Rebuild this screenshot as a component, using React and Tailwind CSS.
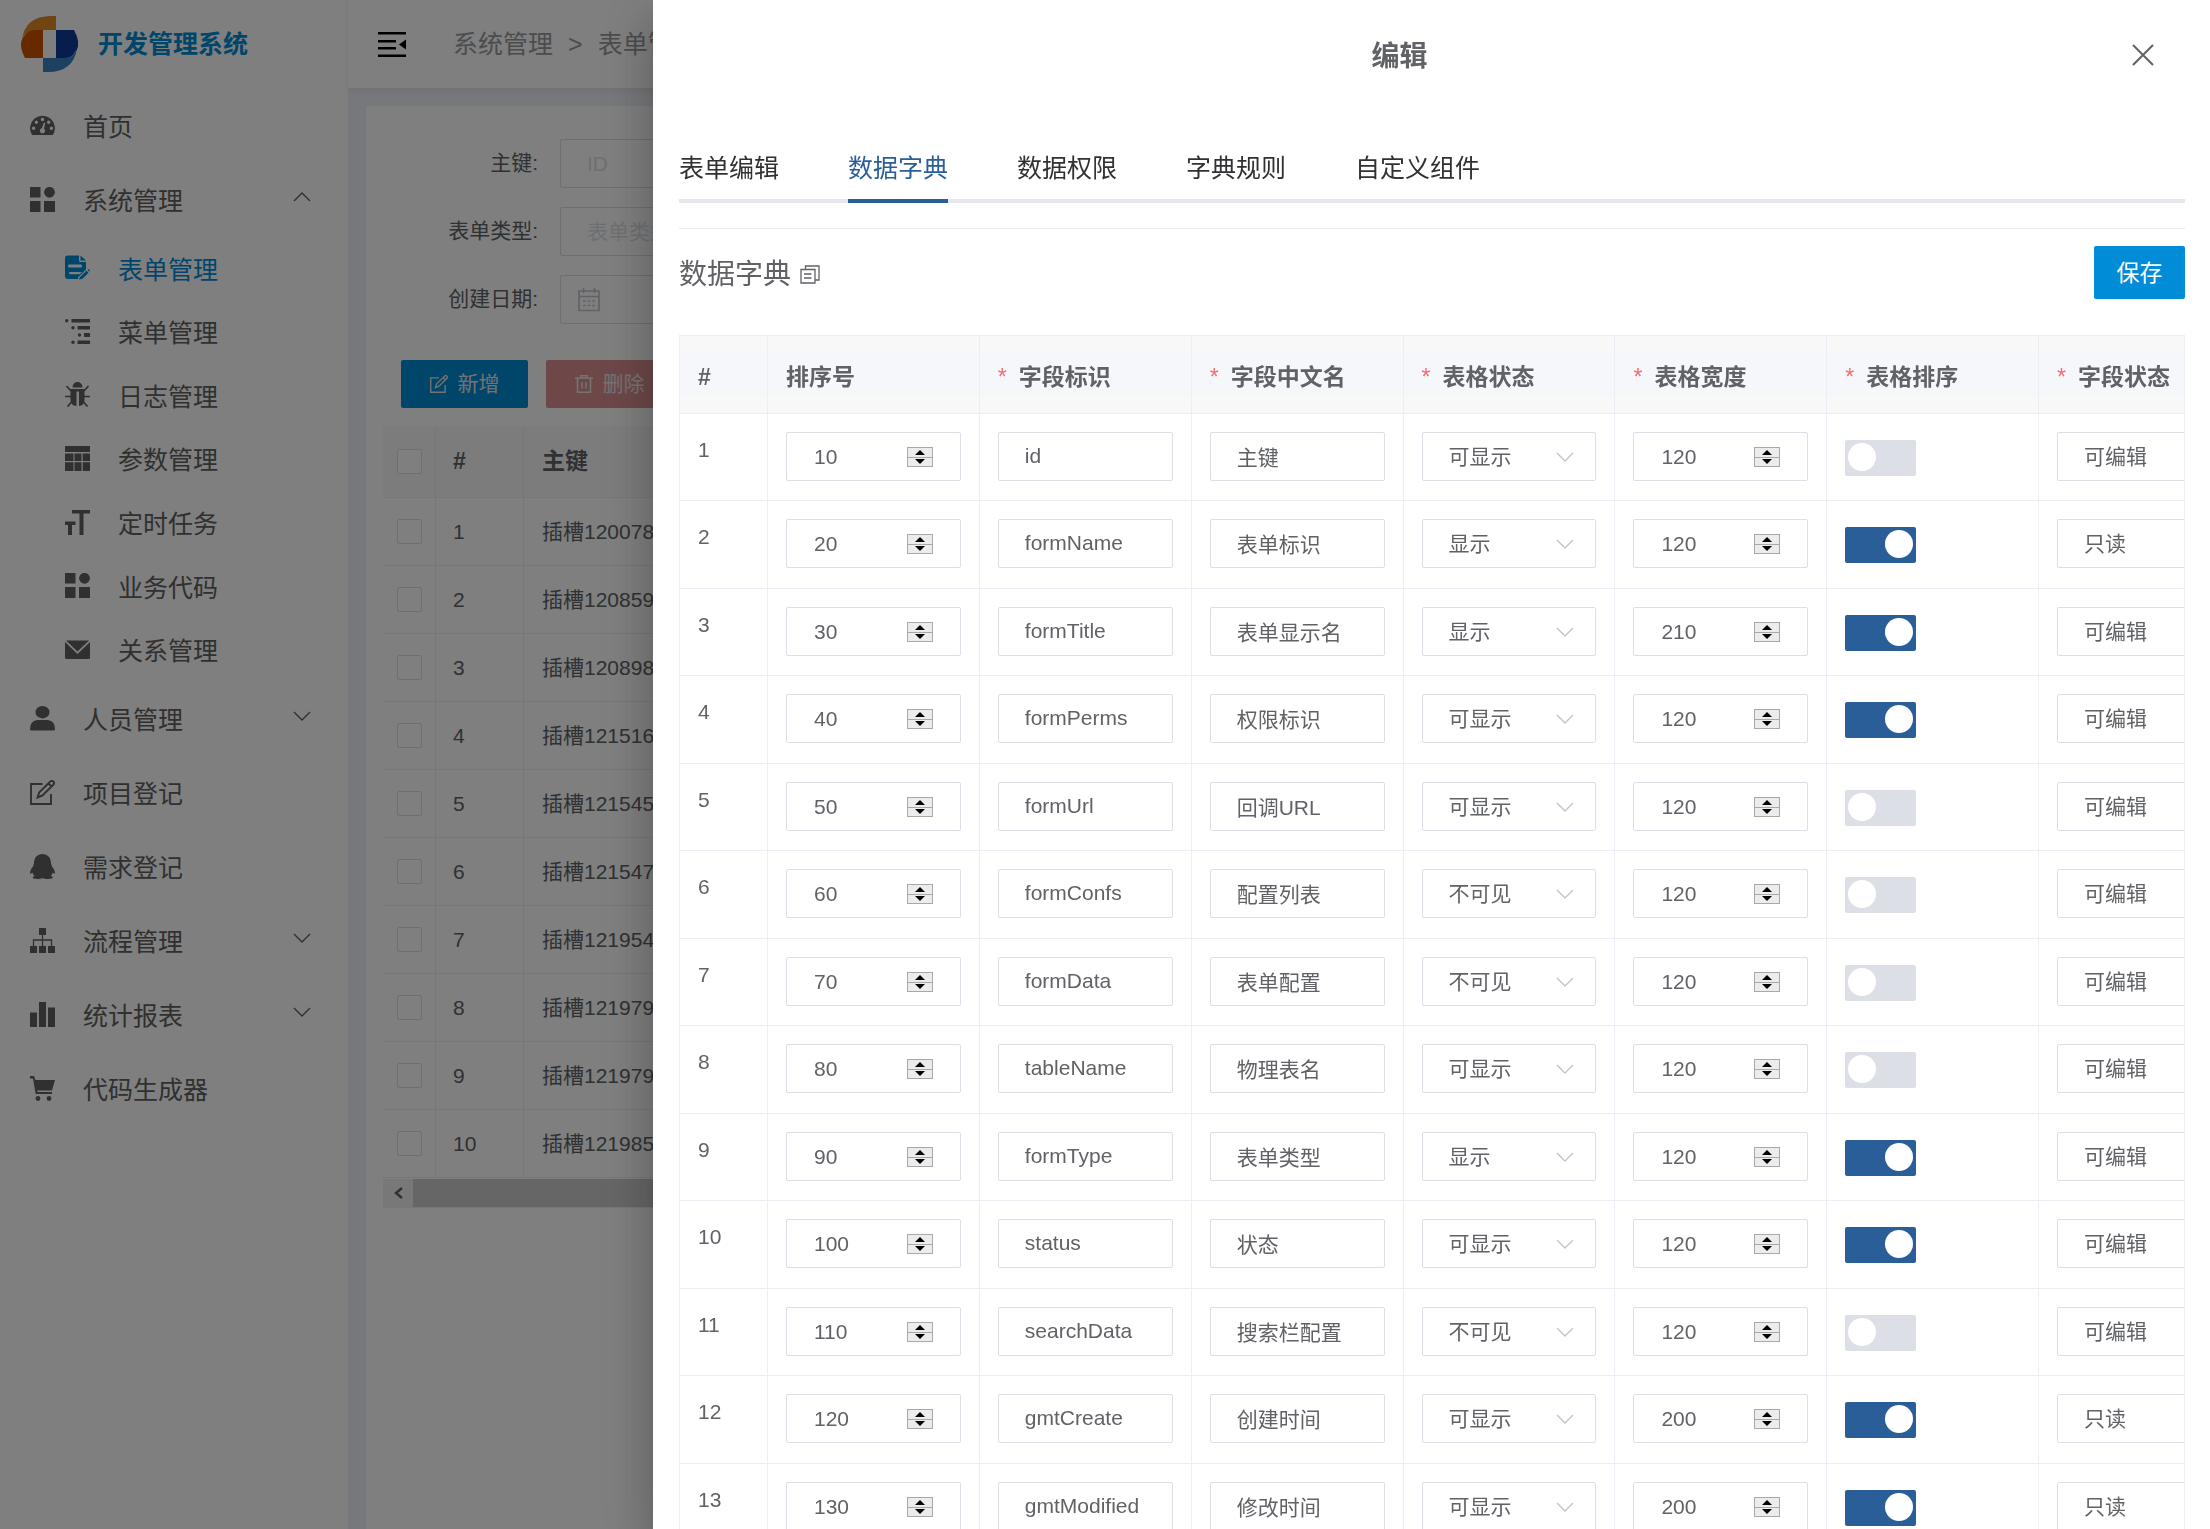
import React, { useState } from "react";

const menus = [
  { name: "首页", icon: "dashboard" },
  {
    name: "系统管理",
    icon: "blocks",
    open: true,
    children: [
      { name: "表单管理", icon: "form", active: true },
      { name: "菜单管理", icon: "tree" },
      { name: "日志管理", icon: "bug" },
      { name: "参数管理", icon: "grid" },
      { name: "定时任务", icon: "size" },
      { name: "业务代码", icon: "blocks" },
      { name: "关系管理", icon: "mail" },
    ],
  },
  { name: "人员管理", icon: "user", arrow: true },
  { name: "项目登记", icon: "edit" },
  { name: "需求登记", icon: "qq" },
  { name: "流程管理", icon: "flow", arrow: true },
  { name: "统计报表", icon: "chart", arrow: true },
  { name: "代码生成器", icon: "cart" },
];

const slots = [
  "插槽120078",
  "插槽120859",
  "插槽120898",
  "插槽121516",
  "插槽121545",
  "插槽121547",
  "插槽121954",
  "插槽121979",
  "插槽121979",
  "插槽121985",
];

const tabs = ["表单编辑", "数据字典", "数据权限", "字典规则", "自定义组件"];

const columns = [
  { label: "排序号" },
  { label: "字段标识", required: true },
  { label: "字段中文名", required: true },
  { label: "表格状态", required: true },
  { label: "表格宽度", required: true },
  { label: "表格排序", required: true },
  { label: "字段状态", required: true },
];

const fields = [
  { sort: 10, prop: "id", label: "主键", show: "可显示", width: 120, sortable: false, edit: "可编辑" },
  { sort: 20, prop: "formName", label: "表单标识", show: "显示", width: 120, sortable: true, edit: "只读" },
  { sort: 30, prop: "formTitle", label: "表单显示名", show: "显示", width: 210, sortable: true, edit: "可编辑" },
  { sort: 40, prop: "formPerms", label: "权限标识", show: "可显示", width: 120, sortable: true, edit: "可编辑" },
  { sort: 50, prop: "formUrl", label: "回调URL", show: "可显示", width: 120, sortable: false, edit: "可编辑" },
  { sort: 60, prop: "formConfs", label: "配置列表", show: "不可见", width: 120, sortable: false, edit: "可编辑" },
  { sort: 70, prop: "formData", label: "表单配置", show: "不可见", width: 120, sortable: false, edit: "可编辑" },
  { sort: 80, prop: "tableName", label: "物理表名", show: "可显示", width: 120, sortable: false, edit: "可编辑" },
  { sort: 90, prop: "formType", label: "表单类型", show: "显示", width: 120, sortable: true, edit: "可编辑" },
  { sort: 100, prop: "status", label: "状态", show: "可显示", width: 120, sortable: true, edit: "可编辑" },
  { sort: 110, prop: "searchData", label: "搜索栏配置", show: "不可见", width: 120, sortable: false, edit: "可编辑" },
  { sort: 120, prop: "gmtCreate", label: "创建时间", show: "可显示", width: 200, sortable: true, edit: "只读" },
  { sort: 130, prop: "gmtModified", label: "修改时间", show: "可显示", width: 200, sortable: true, edit: "只读" },
];

const icons = {
  dashboard: (
    <path
      fillRule="evenodd"
      d="M2.2 22A12.4 12.4 0 1 1 22.8 22ZM12.5 4.8a1.7 1.7 0 1 0 0 3.4a1.7 1.7 0 0 0 0-3.4ZM6.3 7.5a1.7 1.7 0 1 0 0 3.4a1.7 1.7 0 0 0 0-3.4ZM18.7 7.5a1.7 1.7 0 1 0 0 3.4a1.7 1.7 0 0 0 0-3.4ZM3.6 13.6a1.7 1.7 0 1 0 0 3.4a1.7 1.7 0 0 0 0-3.4ZM21.4 13.6a1.7 1.7 0 1 0 0 3.4a1.7 1.7 0 0 0 0-3.4ZM14 9.5L11.8 15.3a2.6 2.6 0 1 0 2.2.4L15.2 9.9Z"
    />
  ),
  blocks: (
    <>
      <path d="M0 0H10.5V10.5H0ZM0 14H10.5V25H0ZM14 14H25V25H14Z" />
      <circle cx="19.5" cy="5.3" r="5.4" />
    </>
  ),
  form: (
    <>
      <path
        fillRule="evenodd"
        d="M3 0.5H14V5.5Q14 7 15.5 7H21V14.5L13 22.5V24H3Q0 24 0 21V3.500Q0 .5 3 .5ZM4 9.500Q3 9.500 3 11T4 12.500H16Q17 12.500 17 11T16 9.500ZM5 17Q4 17 4 18T5 19.200H14.500L17 17Z"
      />
      <path d="M15.500 .5L21 5.500H15.500ZM14 24.500L15 22L21.500 15.800L23.500 17.800L17.500 23.800ZM22.500 15L23.500 14L25 15.600L24.300 16.800Z" />
    </>
  ),
  tree: (
    <>
      <path d="M6.500 0H25V3.500H6.500ZM12.500 7H25V10.500H12.500ZM19 14H25V18H19ZM12.500 21.500H25V25H12.500Z" />
      <circle cx="1.700" cy="1.800" r="1.700" />
      <circle cx="8" cy="8.800" r="1.700" />
      <circle cx="14.500" cy="16" r="1.700" />
      <circle cx="8" cy="23.200" r="1.700" />
    </>
  ),
  bug: (
    <>
      <path d="M7.500 5.500Q8 0 12.500 0T17.500 5.500ZM5.500 7H19.500V18Q19.500 23.500 14 24V9.500H11.500V24Q5.500 23.500 5.500 18Z" />
      <path
        fill="none"
        stroke="currentColor"
        strokeWidth="1.700"
        d="M1.500 4L6 9M23.500 4L19 9M0 14.500H6M25 14.500H19M2.500 24.500L7 19.500M22.500 24.500L18 19.500"
      />
    </>
  ),
  grid: (
    <path d="M0 0H25V6H0ZM0 7.500H8.500V15H0ZM9.500 7.500H16.500V15H9.500ZM17.700 7.500H25V15H17.700ZM0 16.300H8.500V25H0ZM9.500 16.300H16.500V25H9.500ZM17.700 16.300H25V25H17.700Z" />
  ),
  size: <path d="M7 0H25V3.500H18.500V25H14.500V3.500H7ZM0 11.500H10.500V15H7V25H3V15H0Z" />,
  mail: (
    <path d="M1 3.500H24L12.500 14.500ZM0 5L12.500 17L25 5V20.500Q25 22 23.500 22H1.500Q0 22 0 20.500Z" />
  ),
  user: (
    <path d="M12.500 0a7 6.200 0 1 1 0 12.400a7 6.200 0 0 1 0-12.400ZM7 14H18Q25 15 25 23Q25 24.500 23.500 24.500H1.500Q0 24.500 0 23Q0 15 7 14Z" />
  ),
  edit: (
    <path
      fill="none"
      stroke="currentColor"
      strokeWidth="1.900"
      d="M12.500 4H1V24H21V14M7.500 17.500L9.300 12.200L20.500 1.300Q22 .3 23.500 1.700Q24.700 3 23.500 4.500L12.500 15.500ZM18.500 3.500L21.500 6.500"
    />
  ),
  qq: (
    <path d="M12.500 0C17.500 0 21 3.500 21 9.500C21.500 10.500 21.800 11.500 21.700 12.200C23.500 14 25 17 25 19C24.800 20.300 23.500 19.500 22.800 18.500C22.500 20 21.800 21 20.800 21.900C22.300 22.300 23 23 22.800 23.800C22 25.400 14.500 25.200 12.500 24C10.500 25.200 3 25.400 2.700 23.800C2.500 23 3.300 22.300 4.600 21.900C3.500 21 2.800 20 2.400 18.500C1.500 19.500 .3 20.300 0 19C0 17 1.500 14 3.300 12.200C3.200 11.500 3.500 10.500 4 9.500C4 3.500 7.500 0 12.500 0Z" />
  ),
  flow: (
    <>
      <path d="M9 0H16V7H9ZM0 18H7V25H0ZM9 18H16V25H9ZM18 18H25V25H18Z" />
      <path fill="none" stroke="currentColor" strokeWidth="1.300" d="M12.500 7V18M3.500 18V12H21.500V18" />
    </>
  ),
  chart: <path d="M0 10.500H7V25H0ZM9 0H16V25H9ZM18 5.500H25V25H18Z" />,
  cart: (
    <>
      <path d="M0 0H4L5.500 4H25L22 14.500H7L7.500 16H22V18H5.700L3 2.500H0Z" />
      <circle cx="8" cy="22.500" r="2.400" />
      <circle cx="19" cy="22.500" r="2.400" />
    </>
  ),
};

function Icon({ name, className }) {
  return (
    <svg viewBox="0 0 25 25" fill="currentColor" className={`shrink-0 ${className}`}>
      {icons[name]}
    </svg>
  );
}

function Chevron({ up }) {
  return (
    <svg viewBox="0 0 18 10" className="w-[18px] h-[10px]" fill="none" stroke="currentColor" strokeWidth="1.4">
      <path d={up ? "M1 9L9 1L17 9" : "M1 1L9 9L17 1"} />
    </svg>
  );
}

function Sidebar() {
  return (
    <aside className="w-[348px] shrink-0 bg-white text-[#606060] text-[25px] leading-8">
      <div className="h-[90px] flex items-center gap-5 pl-[21px] pb-0.5">
        <svg viewBox="0 0 57 56" className="w-[57px] h-14">
          <path d="M35 0V14H14Q4 14 1 24Q4 0 30 0Z" fill="#e08a22" />
          <path d="M14 14H22V42H4Q-4 27 4 19Q7 14 14 14Z" fill="#cc5200" />
          <path d="M22 14H35V42H22Z" fill="#fff" />
          <path d="M35 14H53Q61 29 54 36Q51 42 44 42H35Z" fill="#0f3a96" />
          <path d="M22 42H44Q52 42 56 33Q52 56 27 56H22Z" fill="#3d80c2" />
        </svg>
        <h1 className="font-bold text-[#008cd6]">开发管理系统</h1>
      </div>
      <nav>
        {menus.map((item) => (
          <div key={item.name}>
            <a href="#" className="h-[74px] flex items-center gap-7 pl-[30px] pr-[37px]">
              <Icon name={item.icon} className="size-[25px] mb-1" />
              <span className="flex-1">{item.name}</span>
              {(item.open || item.arrow) && (
                <span className="pb-2">
                  <Chevron up={item.open} />
                </span>
              )}
            </a>
            {item.children && (
              <div className="h-[445px] grid">
                {item.children.map((child) => (
                  <a
                    key={child.name}
                    href="#"
                    className={`flex items-center gap-7 pl-[65px] ${
                      child.active ? "text-[#008cd6]" : ""
                    }`}
                  >
                    <Icon name={child.icon} className="size-[25px] mb-1" />
                    <span>{child.name}</span>
                  </a>
                ))}
              </div>
            )}
          </div>
        ))}
      </nav>
    </aside>
  );
}

function ListPage() {
  return (
    <div className="flex-1 min-w-0 flex flex-col bg-[#eff1f6]">
      <header className="h-[88px] shrink-0 flex items-center bg-white pl-[30px] shadow-[0_2px_8px_rgba(0,21,41,0.08)] text-[25px]">
        <button aria-label="收起菜单" className="text-black">
          <svg viewBox="0 0 28 25" className="w-7 h-[25px]" fill="currentColor">
            <path d="M0 0H28V2.500H0ZM0 8H18V10.500H0ZM0 15H18V17.500H0ZM0 22.500H28V25H0ZM28 7.500V17.500L21 12.500Z" />
          </svg>
        </button>
        <nav className="flex items-center gap-[15px] ml-[47px] pt-0.5 whitespace-nowrap text-[#97989c]">
          <a href="#">系统管理</a>
          <span>&gt;</span>
          <a href="#">表单管理</a>
        </nav>
      </header>

      <main className="flex-1 mt-[18px] ml-[18px] pl-[17px] pt-[33px] bg-white text-[21px] text-[#606266]">
        <form className="flex flex-col gap-[19px]">
          <div className="flex items-center gap-[22px]">
            <label htmlFor="search-id" className="w-[155px] pb-0.5 text-right">主键:</label>
            <input id="search-id" placeholder="ID" className="w-[300px] h-[49px] px-[26px] border border-[#dcdfe6] rounded-xs placeholder:text-[#dcdfe6]" />
          </div>
          <div className="flex items-center gap-[22px]">
            <label htmlFor="search-type" className="w-[155px] pb-0.5 text-right">表单类型:</label>
            <input id="search-type" placeholder="表单类型" className="w-[300px] h-[49px] px-[26px] border border-[#dcdfe6] rounded-xs placeholder:text-[#dcdfe6]" />
          </div>
          <div className="flex items-center gap-[22px]">
            <label htmlFor="search-date" className="w-[155px] pb-0.5 text-right">创建日期:</label>
            <div className="w-[300px] h-[49px] flex items-center pl-[17px] border border-[#dcdfe6] rounded-xs text-[#c0c4cc]">
              <svg viewBox="0 0 22 24" className="w-[22px] h-6 shrink-0" fill="none" stroke="currentColor" strokeWidth="1.7">
                <path d="M1 3H21V22.500H1ZM1 8.500H21M5.500 0V5M16.500 0V5" />
                <path d="M5 13H17M5 17.500H17" strokeDasharray="2.700 1.900" />
              </svg>
              <input id="search-date" className="min-w-0 flex-1" />
            </div>
          </div>
        </form>

        <div className="flex gap-[18px] mt-9 pl-[18px] text-[#e6e6e6]">
          <button className="w-[127px] h-12 flex items-center justify-center gap-2.5 rounded-xs bg-[#008cd6]">
            <Icon name="edit" className="size-[18px]" />
            新增
          </button>
          <button className="w-[127px] h-12 flex items-center justify-center gap-2.5 rounded-xs bg-[#dc9090]">
            <svg viewBox="0 0 18 18" className="size-[18px]" fill="none" stroke="currentColor" strokeWidth="1.6">
              <path d="M0 3H18M6 3V.7H12V3M2.500 3V17.300H15.500V3M7 7V13.500M11 7V13.500" />
            </svg>
            删除
          </button>
        </div>

        <div className="overflow-hidden mt-[18px]">
          <table className="w-full table-fixed border-separate border-spacing-0">
            <thead>
              <tr className="h-[72px] bg-[#f8f8f8] text-[23px] text-left">
                <th className="w-[53px] border-b border-r border-[#ebeef5]">
                  <input type="checkbox" aria-label="全选" className="block ml-3.5 size-[25px] appearance-none border border-[#dcdfe6] rounded-xs bg-white" />
                </th>
                <th className="w-[88px] pl-[17px] border-b border-r border-[#ebeef5]">#</th>
                <th className="pl-[18px] border-b border-[#ebeef5]">主键</th>
              </tr>
            </thead>
            <tbody>
              {slots.map((slot, index) => (
                <tr key={index} className="h-[68px]">
                  <td className="border-b border-r border-[#ebeef5]">
                    <input type="checkbox" aria-label={`选择第${index + 1}行`} className="block ml-3.5 size-[25px] appearance-none border border-[#dcdfe6] rounded-xs" />
                  </td>
                  <td className="pl-[17px] border-b border-r border-[#ebeef5]">{index + 1}</td>
                  <td className="pl-[18px] border-b border-[#ebeef5] whitespace-nowrap">{slot}</td>
                </tr>
              ))}
            </tbody>
          </table>
          {/* horizontal scrollbar */}
          <div className="flex h-[29px] mt-px border-b border-[#ebeef5]">
            <div className="w-[30px] flex items-center justify-center bg-[#f1f1f1]">
              <svg viewBox="0 0 9 12" className="w-[9px] h-3" fill="none" stroke="currentColor" strokeWidth="2.500">
                <path d="M8 1L2 6L8 11" />
              </svg>
            </div>
            <div className="flex-1 bg-[#cdcdcd]"></div>
          </div>
        </div>
      </main>
    </div>
  );
}

function NumberInput({ label, value }) {
  const [num, setNum] = useState(value);

  return (
    <div className="relative">
      <input
        type="number"
        aria-label={label}
        value={num}
        onChange={(e) => setNum(Number(e.target.value))}
        className="w-full h-[49px] pl-[27px] pr-14 border border-[#dcdfe6] rounded-xs outline-none [appearance:textfield] [&::-webkit-inner-spin-button]:appearance-none"
      />
      <div className="absolute right-7 top-[15px] w-[26px] h-5 flex flex-col border border-[#a9a9a9] bg-[#ececec] text-black">
        <button aria-label="增加" className="flex-1 flex items-center justify-center border-b border-[#a9a9a9]" onClick={() => setNum(num + 1)}>
          <svg viewBox="0 0 10 5" className="w-2.5 h-[5px]"><path d="M5 0L10 5H0Z" /></svg>
        </button>
        <button aria-label="减少" className="flex-1 flex items-center justify-center" onClick={() => setNum(num - 1)}>
          <svg viewBox="0 0 10 5" className="w-2.5 h-[5px]"><path d="M0 0H10L5 5Z" /></svg>
        </button>
      </div>
    </div>
  );
}

function SelectInput({ label, value, options }) {
  return (
    <div className="relative">
      <select
        aria-label={label}
        defaultValue={value}
        className="w-full h-[49px] pl-[26px] pr-12 appearance-none border border-[#dcdfe6] rounded-xs bg-white outline-none"
      >
        {options.map((option) => (
          <option key={option}>{option}</option>
        ))}
      </select>
      <span className="absolute right-[22px] top-0 h-full flex items-center pointer-events-none text-[#c0c4cc]">
        <Chevron />
      </span>
    </div>
  );
}

function TextInput({ label, value }) {
  return (
    <input
      aria-label={label}
      defaultValue={value}
      className="block w-full h-[49px] px-[26px] pb-0.5 border border-[#dcdfe6] rounded-xs outline-none"
    />
  );
}

const cell = "px-[18px] pt-[18px] align-top border-b border-r border-[#ebeef5]";

function DictTable() {
  return (
    <div className="mt-9 overflow-hidden border-t border-x border-[#ebeef5]">
      <table className="w-[1571px] table-fixed border-separate border-spacing-0 text-[21px]">
        <thead>
          <tr className="h-[78px] bg-[#f8f8f8] text-[23px] text-left">
            <th className="w-[88px] border-b border-r border-[#ebeef5]">
              <div className="h-[42px] pt-1 leading-[38px] pl-[18px] bg-[#f5f7fb]">#</div>
            </th>
            {columns.map((col) => (
              <th key={col.label} className="border-b border-r border-[#ebeef5]">
                <div className="h-[42px] pt-1 leading-[38px] pl-[18px] bg-[#f5f7fb] whitespace-nowrap">
                  {col.required && <span className="inline-block w-[21px] font-normal text-[#f56c6c]">*</span>}
                  {col.label}
                </div>
              </th>
            ))}
          </tr>
        </thead>
        <tbody>
          {fields.map((row, index) => (
            <tr key={row.prop} className="odd:h-[87px] even:h-[88px]">
              <td className="px-[18px] pt-5 align-top leading-8 border-b border-r border-[#ebeef5]">{index + 1}</td>
              <td className={cell}>
                <NumberInput label="排序号" value={row.sort} />
              </td>
              <td className={cell}>
                <TextInput label="字段标识" value={row.prop} />
              </td>
              <td className={cell}>
                <TextInput label="字段中文名" value={row.label} />
              </td>
              <td className={cell}>
                <SelectInput label="表格状态" value={row.show} options={["可显示", "显示", "不可见"]} />
              </td>
              <td className={cell}>
                <NumberInput label="表格宽度" value={row.width} />
              </td>
              <td className="px-[18px] pt-[26px] align-top border-b border-r border-[#ebeef5]">
                <input
                  type="checkbox"
                  role="switch"
                  aria-label="表格排序"
                  defaultChecked={row.sortable}
                  className="block w-[71px] h-9 p-[3px] appearance-none rounded-xs bg-[#dcdfe6] checked:bg-[#295e98] before:block before:size-7 before:rounded-full before:bg-white checked:before:ml-[37px]"
                />
              </td>
              <td className={cell}>
                <SelectInput label="字段状态" value={row.edit} options={["可编辑", "只读"]} />
              </td>
            </tr>
          ))}
        </tbody>
      </table>
    </div>
  );
}

function EditDrawer() {
  const [tab, setTab] = useState("数据字典");

  return (
    <div className="fixed inset-0 flex bg-black/50">
      <section
        role="dialog"
        aria-label="编辑"
        className="ml-[653px] flex-1 min-w-0 overflow-hidden bg-white text-[#606266] shadow-[0_14px_18px_-9px_rgba(0,0,0,0.2),0_28px_42px_4px_rgba(0,0,0,0.14),0_11px_53px_9px_rgba(0,0,0,0.12)]"
      >
        <header className="h-[110px] flex items-center px-[35px]">
          <h2 className="flex-1 pt-1 text-center text-[28px] font-bold">编辑</h2>
          <button aria-label="关闭" className="w-16 flex justify-center">
            <svg viewBox="0 0 22 22" className="size-[22px]" fill="none" stroke="currentColor" strokeWidth="2">
              <path d="M1 1L21 21M21 1L1 21" />
            </svg>
          </button>
        </header>

        <div className="mt-[22px] pl-[26px] pr-[25px]">
          <div className="flex gap-[69px] shadow-[inset_0_-4px_0_#e4e7ed]">
            {tabs.map((name) => (
              <button
                key={name}
                onClick={() => setTab(name)}
                className={`h-[71px] pt-1.5 text-[25px] border-b-4 ${
                  tab === name ? "text-[#295e98] border-[#295e98]" : "text-[#303133] border-transparent"
                }`}
              >
                {name}
              </button>
            ))}
          </div>

          <div className="flex items-center justify-between mt-[25px] pt-[17px] border-t border-[#ececec]">
            <h3 className="flex items-center gap-[9px] pt-1 text-[28px]">
              数据字典
              <svg viewBox="0 0 20 19" className="w-5 h-[19px]" fill="none" stroke="currentColor" strokeWidth="1.300">
                <path d="M1 4.500H15V18H1ZM5.500 4V1H19V15H15.500M4 9H11.500M4 13H11.500" />
              </svg>
            </h3>
            <button className="w-[91px] h-[53px] pt-0.5 bg-[#008cd6] text-white text-[23px] rounded-xs">保存</button>
          </div>

          <DictTable />
        </div>
      </section>
    </div>
  );
}

function App() {
  return (
    <div className="h-screen overflow-hidden flex font-['Liberation_Sans','Noto_Sans_CJK_SC',sans-serif]">
      <Sidebar />
      <ListPage />
      <EditDrawer />
    </div>
  );
}

export default App;
